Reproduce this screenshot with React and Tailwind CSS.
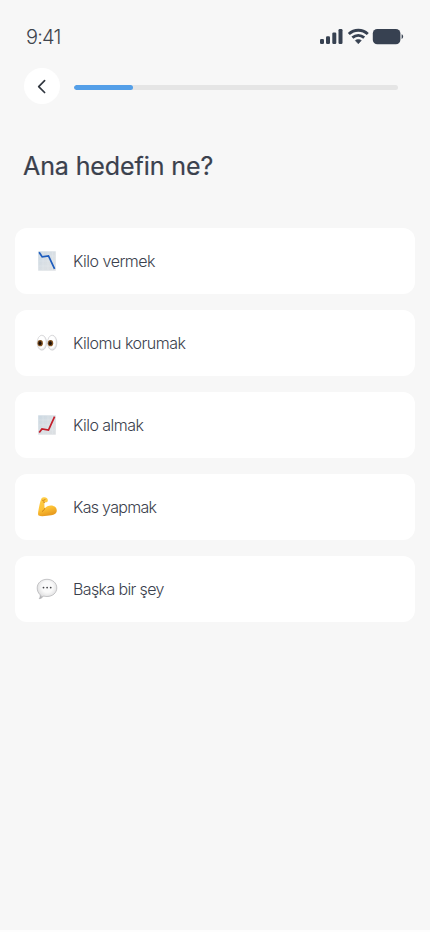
import React from 'react';

function ChartIcon({ up }) {
  const id = up ? 'paper-up' : 'paper-down';
  return (
    <svg viewBox="0 0 22 22" className="size-[22px]">
      <defs>
        <linearGradient id={id} x1="0" y1="0" x2="1" y2="1">
          <stop offset="0" stopColor="#cbd8e2" />
          <stop offset=".6" stopColor="#dbe0e4" />
          <stop offset="1" stopColor="#dcdfe2" />
        </linearGradient>
      </defs>
      <rect x="2.2" y="1.3" width="17.6" height="19.4" fill={`url(#${id})`} />
      <path d="M2.5 6h17M2.5 11h17M2.5 16h17M7 1.5v19M12 1.5v19M16.500 1.500v19" stroke="#e6ebef" strokeWidth=".4" />
      <path
        d={up ? 'M3.200 18.500L6 14.900l6.500 1.200L18.600 2.600' : 'M3.100 2.300L6.200 6.900l6.300-1L18.600 18.800'}
        fill="none"
        stroke={up ? '#c41e2b' : '#1c5cbe'}
        strokeWidth="1.700"
      />
    </svg>
  );
}

function EyesIcon() {
  return (
    <svg viewBox="0 0 22 22" className="size-[22px]">
      <defs>
        <radialGradient id="eyeball" cx=".45" cy=".45" r=".6">
          <stop offset=".6" stopColor="#fff" />
          <stop offset="1" stopColor="#d5d5d8" />
        </radialGradient>
      </defs>
      {[5.900, 16.200].map((x) => (
        <g key={x}>
          <ellipse cx={x} cy="10.700" rx="4.700" ry="7.500" fill="url(#eyeball)" stroke="#c8c8cb" strokeWidth=".6" />
          <ellipse cx={x - 1.700} cy="11.200" rx="2.700" ry="3.100" fill="#80501f" />
          <ellipse cx={x - 1.900} cy="11.200" rx="1.500" ry="1.900" fill="#1b0f08" />
        </g>
      ))}
    </svg>
  );
}

function BicepsIcon() {
  return (
    <svg viewBox="0 0 22 22" className="size-[22px]">
      <defs>
        <linearGradient id="skin" x1="0" y1="0" x2=".3" y2="1">
          <stop offset="0" stopColor="#ffd04a" />
          <stop offset=".65" stopColor="#fdc235" />
          <stop offset="1" stopColor="#e99d20" />
        </linearGradient>
      </defs>
      <path
        d="M5.300 2.700C6.300 1.300 9.300.9 10.700 2c1.200.8 1.500 2.700.7 3.700-.6.700-2.100.8-2.900.3-.2 2.200-.1 4.200.2 6.500 2-2.900 7-4.200 10-1.900 2.600 2 2.700 5.400.6 7.200-2.300 1.900-5.600 1.500-8.200 1.900-3 .5-6.400.8-8.400-.1-1-.6-.7-3.500-.1-6.200.7-3.500 1.400-7.500 2.700-10.700Z"
        fill="url(#skin)"
      />
      <path d="M6.500 4.300c1.200.200 2.300 0 2.700-1M7.200 5.800c.6.500 1 .7 1.500.6M8.700 12.500c-.6 1.300-.9 2.200-2.300 2.800" fill="none" stroke="#c97c14" strokeWidth=".9" strokeLinecap="round" />
    </svg>
  );
}

function SpeechIcon() {
  return (
    <svg viewBox="0 0 22 22" className="size-[22px]">
      <defs>
        <radialGradient id="bubble" cx=".52" cy=".4" r=".6">
          <stop offset=".45" stopColor="#fafafa" />
          <stop offset=".85" stopColor="#e2e2e3" />
          <stop offset="1" stopColor="#b4b4b6" />
        </radialGradient>
      </defs>
      <path
        d="M11 1.300c5.600 0 9.800 3.700 9.800 8.600s-4.200 8.600-9.800 8.600c-1.400 0-2.500-.2-3.600-.5-.8 1.500-2.300 2.500-4.200 2.700 1-1.100 1.300-2.700.7-4.200C2.200 14.900 1.200 12.600 1.200 9.900c0-4.900 4.200-8.600 9.800-8.600Z"
        fill="url(#bubble)"
        stroke="#b0b0b3"
        strokeWidth=".7"
      />
      <circle cx="7.500" cy="9.600" r=".9" fill="#444448" />
      <circle cx="11.100" cy="9.600" r=".9" fill="#444448" />
      <circle cx="14.700" cy="9.600" r=".9" fill="#444448" />
    </svg>
  );
}

const goals = [
  { label: 'Kilo vermek', icon: <ChartIcon />, tracking: 'tracking-[-0.5px]' },
  { label: 'Kilomu korumak', icon: <EyesIcon />, tracking: 'tracking-[-0.5px]' },
  { label: 'Kilo almak', icon: <ChartIcon up />, tracking: 'tracking-[-0.54px]' },
  { label: 'Kas yapmak', icon: <BicepsIcon />, tracking: 'tracking-[-0.7px]' },
  { label: 'Başka bir şey', icon: <SpeechIcon />, tracking: 'tracking-[-0.62px]' },
];

function StatusBar() {
  return (
    <div className="flex h-[68px] items-center justify-between pt-[5px] pr-[26px] pl-[26px]">
      <span className="text-[20px] leading-6 font-light tracking-[-0.8px] text-[#3f444d]">9:41</span>
      <svg viewBox="0 0 84 18" className="h-[18px] w-[84px]" fill="#374151">
        <rect x="0" y="11" width="4" height="5" rx="1.200" />
        <rect x="6" y="8.200" width="4" height="7.800" rx="1.200" />
        <rect x="12.300" y="4.500" width="4" height="11.500" rx="1.200" />
        <rect x="18.500" y="1" width="4" height="15" rx="1.200" />
        <g fill="none" stroke="#374151" strokeWidth="2.900">
          <path d="M28.800 6c5.500-5 13.500-5 19 0" />
          <path d="M32.400 9.700c3.500-3 8.300-3 11.800 0" />
        </g>
        <path d="M35.300 12.500c1.700-1.400 4.300-1.400 6 0L38.300 15.800Z" stroke="#374151" strokeWidth=".6" strokeLinejoin="round" />
        <rect x="52.800" y="1" width="27.600" height="15.200" rx="4.500" />
        <path d="M81.600 6.300c2 .6 2 4 0 4.600Z" />
      </svg>
    </div>
  );
}

export default function App() {
  return (
    <main className="h-[932px] w-[430px] overflow-hidden border-b-2 border-[#fdfdfd] bg-[#f7f7f7] font-[Inter,sans-serif] text-[#3b414d]">
      <StatusBar />
      <div className="flex h-9 items-center pr-8 pl-6">
        <button aria-label="Geri" className="flex size-9 items-center justify-center rounded-full bg-white">
          <svg viewBox="0 0 16 16" className="size-4" fill="none" stroke="#30363f" strokeWidth="1.700" strokeLinecap="round" strokeLinejoin="round">
            <path d="M10.600 2.700L4.700 8.600l5.900 5.900" />
          </svg>
        </button>
        <div className="mt-[2px] ml-[14px] h-[5px] flex-1 overflow-hidden rounded-full bg-[#e5e5e5]">
          <div className="h-full w-[59px] rounded-full bg-[#549fe8]" />
        </div>
      </div>
      <h1 className="mt-[46px] ml-[23px] text-[25px] leading-8 font-normal tracking-[-0.1px] whitespace-nowrap [-webkit-text-stroke:0.2px_#3b414d]">Ana hedefin ne?</h1>
      <div className="mt-[46px] flex flex-col gap-4 px-[15px]">
        {goals.map((goal) => (
          <button key={goal.label} className="flex h-[66px] items-center gap-[15px] rounded-xl bg-white pl-[21px] text-left">
            {goal.icon}
            <span className={`text-[16px] leading-6 font-light whitespace-nowrap ${goal.tracking}`}>{goal.label}</span>
          </button>
        ))}
      </div>
    </main>
  );
}
